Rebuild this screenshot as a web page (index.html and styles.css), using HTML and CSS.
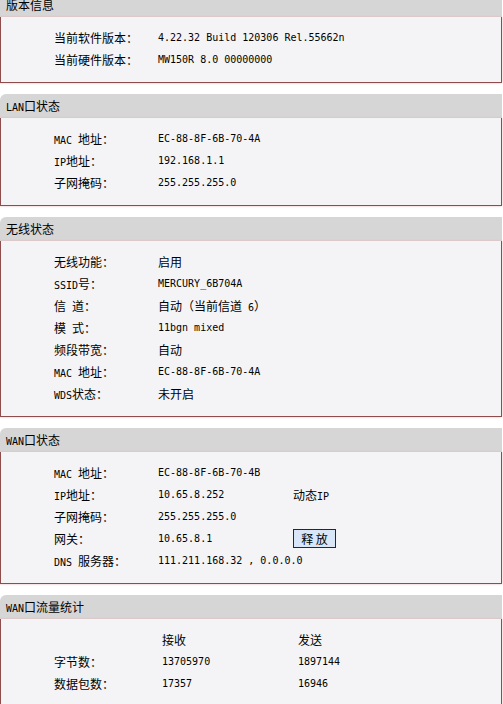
FILE: index.html
```html
<!DOCTYPE html>
<html>
<head>
<meta charset="utf-8">
<link rel="stylesheet" href="styles.css">
</head>
<body>
<div class="page">
  <div class="section">
    <div class="head">版本信息</div>
    <div class="box">
      <div class="row"><div class="lbl">当前软件版本：</div><div class="val en">4.22.32 Build 120306 Rel.55662n</div></div>
      <div class="row"><div class="lbl">当前硬件版本：</div><div class="val en">MW150R 8.0 00000000</div></div>
    </div>
  </div>

  <div class="section">
    <div class="head"><span class="en">LAN</span>口状态</div>
    <div class="box">
      <div class="row"><div class="lbl"><span class="en">MAC&nbsp;</span>地址：</div><div class="val en">EC-88-8F-6B-70-4A</div></div>
      <div class="row"><div class="lbl"><span class="en">IP</span>地址：</div><div class="val en">192.168.1.1</div></div>
      <div class="row"><div class="lbl">子网掩码：</div><div class="val en">255.255.255.0</div></div>
    </div>
  </div>

  <div class="section">
    <div class="head">无线状态</div>
    <div class="box">
      <div class="row"><div class="lbl">无线功能：</div><div class="val">启用</div></div>
      <div class="row"><div class="lbl"><span class="en">SSID</span>号：</div><div class="val en">MERCURY_6B704A</div></div>
      <div class="row"><div class="lbl">信<span class="en">&nbsp;</span>道：</div><div class="val">自动（当前信道<span class="en">&nbsp;6</span>）</div></div>
      <div class="row"><div class="lbl">模<span class="en">&nbsp;</span>式：</div><div class="val en">11bgn mixed</div></div>
      <div class="row"><div class="lbl">频段带宽：</div><div class="val">自动</div></div>
      <div class="row"><div class="lbl"><span class="en">MAC&nbsp;</span>地址：</div><div class="val en">EC-88-8F-6B-70-4A</div></div>
      <div class="row"><div class="lbl"><span class="en">WDS</span>状态：</div><div class="val">未开启</div></div>
    </div>
  </div>

  <div class="section">
    <div class="head"><span class="en">WAN</span>口状态</div>
    <div class="box">
      <div class="row"><div class="lbl"><span class="en">MAC&nbsp;</span>地址：</div><div class="val wide en">EC-88-8F-6B-70-4B</div></div>
      <div class="row"><div class="lbl"><span class="en">IP</span>地址：</div><div class="val wide en">10.65.8.252</div><div class="val">动态<span class="en">IP</span></div></div>
      <div class="row"><div class="lbl">子网掩码：</div><div class="val wide en">255.255.255.0</div></div>
      <div class="row"><div class="lbl">网关：</div><div class="val wide en">10.65.8.1</div><div class="val"><button class="btn">释 放</button></div></div>
      <div class="row"><div class="lbl"><span class="en">DNS&nbsp;</span>服务器：</div><div class="val en">111.211.168.32 , 0.0.0.0</div></div>
    </div>
  </div>

  <div class="section">
    <div class="head"><span class="en">WAN</span>口流量统计</div>
    <div class="box">
      <div class="row"><div class="lbl lbl2"></div><div class="val col">接收</div><div class="val">发送</div></div>
      <div class="row"><div class="lbl lbl2">字节数：</div><div class="val col en">13705970</div><div class="val en">1897144</div></div>
      <div class="row"><div class="lbl lbl2">数据包数：</div><div class="val col en">17357</div><div class="val en">16946</div></div>
    </div>
  </div>
</div>
</body>
</html>
```

FILE: styles.css
```css
html, body {
  margin: 0;
  padding: 0;
  background: #ffffff;
}
body {
  font-family: "Noto Sans CJK SC", "DejaVu Sans", sans-serif;
  font-size: 12px;
  color: #000;
  overflow: hidden;
}
.page {
  margin-top: -7px;
  width: 502px;
}
.section {
  margin-bottom: 11px;
}
.head {
  height: 24px;
  line-height: 24px;
  background: #d6d6d6;
  border-top-left-radius: 6px;
  padding-left: 6px;
  white-space: nowrap;
}
.box {
  background: #f4f4f6;
  border: 1px solid #8e4c4c;
  border-top: none;
  box-shadow: 0 0 2px #eab0b0;
  padding: 10px 0 11px 53px;
}
.row {
  display: flex;
  height: 22px;
  line-height: 22px;
  white-space: nowrap;
}
.lbl {
  width: 104px;
  flex: none;
}
.lbl2 {
  width: 108px;
}
.val {
  flex: none;
}
.val.wide {
  width: 135px;
}
.val.col {
  width: 136px;
}
.en {
  font-family: "DejaVu Sans Mono", "Liberation Mono", monospace;
  font-size: 10px;
}
.btn {
  font-family: "Noto Sans CJK SC", sans-serif;
  font-size: 12px;
  height: 19px;
  width: 43px;
  padding: 0;
  margin: 1px 0 0 0;
  line-height: 15px;
  background: #d9e6f7;
  border: 1px solid #162c3a;
  color: #000;
  vertical-align: top;
}
```
